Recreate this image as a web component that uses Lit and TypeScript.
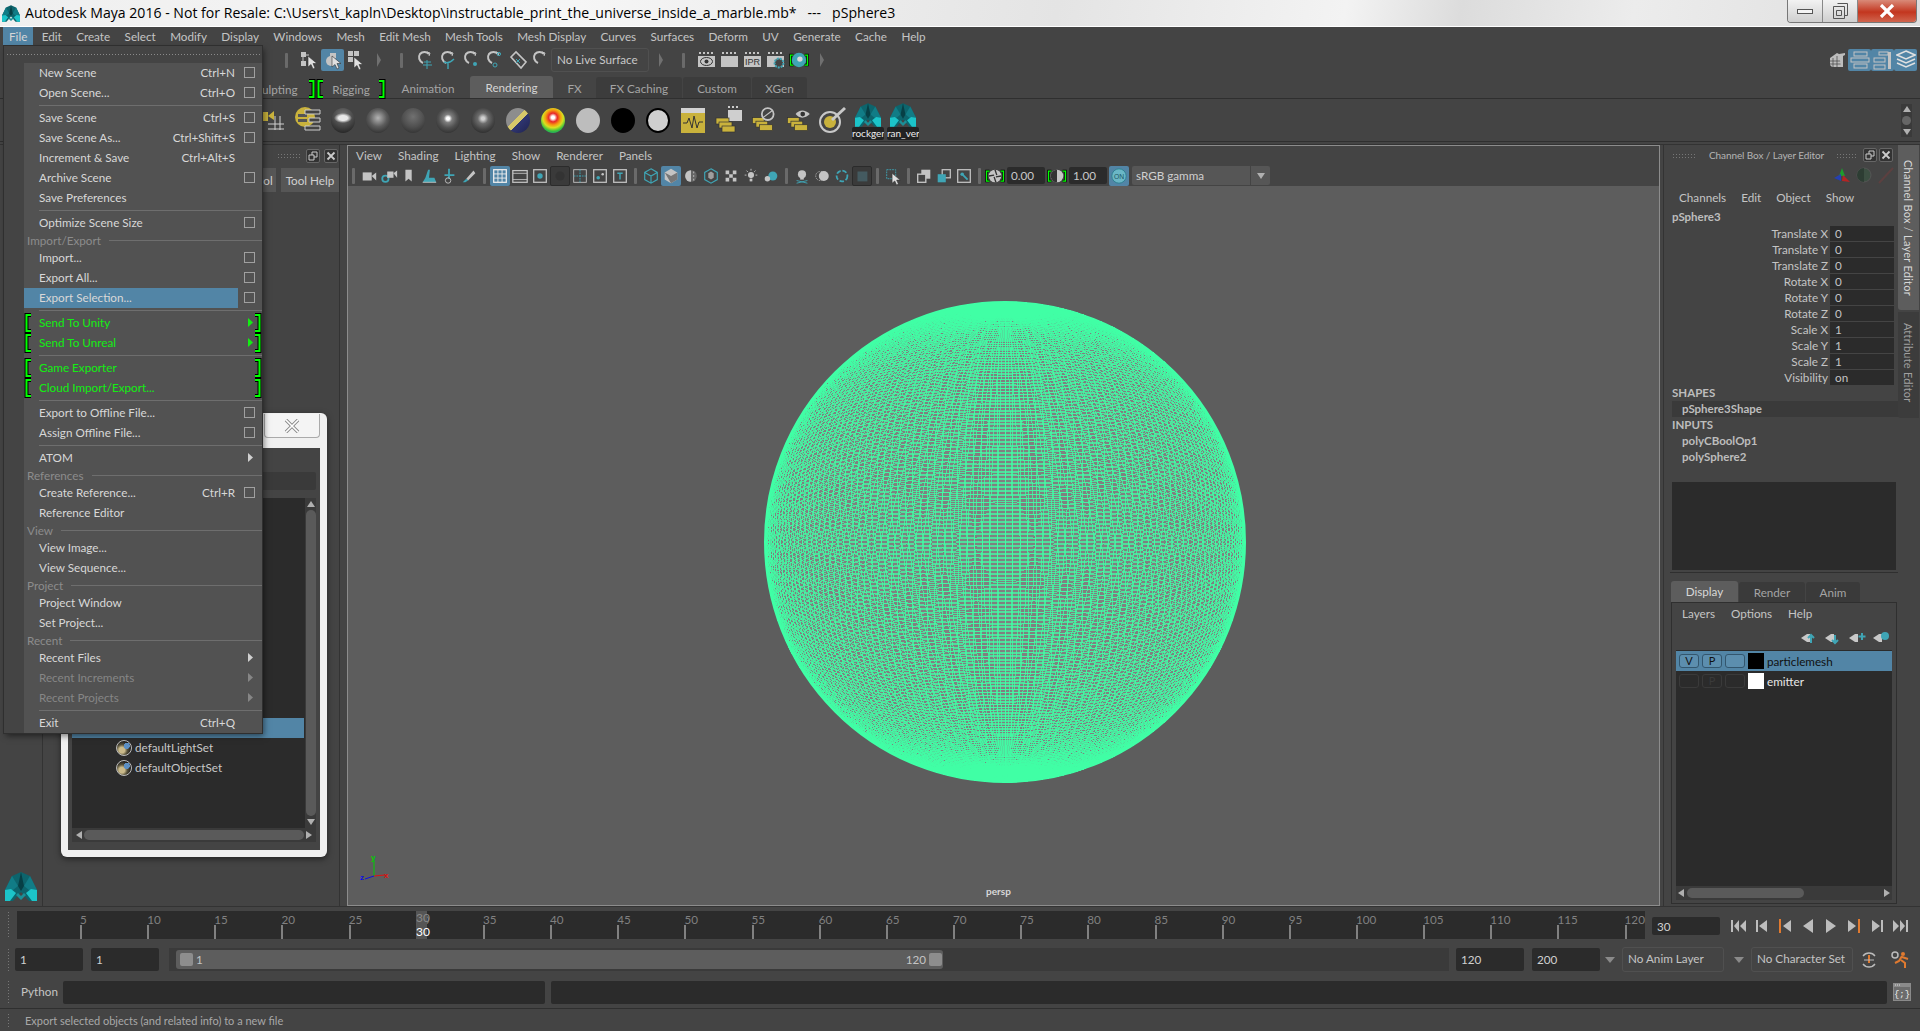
import { LitElement, html, css, svg } from "lit";
import { customElement } from "lit/decorators.js";

// sphere wireframe, both sides visible, tilted a little so the poles come into view
function sphereWire(r: number, nLon: number, nLat: number, tilt: number) {
  const c = Math.cos(tilt);
  const s = Math.sin(tilt);
  const pt = (lat: number, lon: number) => {
    const x = r * Math.cos(lat) * Math.sin(lon);
    const y = r * Math.sin(lat);
    const z = r * Math.cos(lat) * Math.cos(lon);
    return `${(r + x + 2).toFixed(1)} ${(r + 2 - (y * c - z * s)).toFixed(1)}`;
  };
  let d = "";
  for (let j = 0; j < nLon; j++) {
    const lon = (j / nLon) * Math.PI * 2;
    for (let i = 0; i <= 64; i++) {
      d += (i ? "L" : "M") + pt(-Math.PI / 2 + (i / 64) * Math.PI, lon);
    }
  }
  for (let i = 1; i < nLat; i++) {
    const lat = -Math.PI / 2 + (i / nLat) * Math.PI;
    for (let j = 0; j <= 128; j++) {
      d += (j ? "L" : "M") + pt(lat, (j / 128) * Math.PI * 2);
    }
  }
  return d;
}

const WIRE = sphereWire(240, 190, 190, 0.3);

const G = "#c4c4c4";
const T = "#3fa5b5";

const cursor = (x: number, y: number) =>
  svg`<path transform="translate(${x} ${y})" d="M0 0l0 11 3-2.5 2 4.5 2-1-2-4.5 4 0z" fill="#e0e0e0" stroke="#333" stroke-width=".6"/>`;

const magnet = (extra: unknown) => svg`
  <path d="M14 4a6 6 0 0 0-9 0c-2 3-1 7 3 9" fill="none" stroke=${G} stroke-width="2"/>
  <path d="M12 2l3 1-1 3" fill="none" stroke=${G} stroke-width="1"/>${extra}`;

const clap = (inner: unknown) => svg`
  <path d="M2 3h2M6 3h2M10 3h2M14 3h2" stroke=${G} stroke-width="2" stroke-dasharray="2 0"/>
  <rect x="1" y="6" width="17" height="11" fill=${G}/>${inner}`;

const layers = (top: unknown) => svg`
  <rect x="2" y="9" width="10" height="5" fill="#c9b23c" stroke="#333" stroke-width=".6"/>
  <rect x="5" y="12" width="10" height="5" fill="#c9b23c" stroke="#333" stroke-width=".6"/>
  <rect x="8" y="15" width="11" height="5" fill="#c9b23c" stroke="#333" stroke-width=".6"/>${top}`;

const box = (inner: unknown) => svg`
  <rect x="3" y="3" width="14" height="14" fill="none" stroke=${G} stroke-width="1.4"/>${inner}`;

const mayaMark = svg`
  <path d="M16 0l9 4 7 14v11h-8l-8-9-8 9H0V18L7 4z" fill="#0d646c"/>
  <path d="M16 0l3 14-3 5-3-5z" fill="#073f45"/>
  <path d="M7 4l6 10-5 4-8 0z" fill="#117c86"/>
  <path d="M25 4l-6 10 5 4 8 0z" fill="#117c86"/>
  <path d="M0 18l6-1 5 4-6 8H0z" fill="#1cc4c9"/>
  <path d="M32 18l-6-1-5 4 6 8h5z" fill="#1cc4c9"/>
  <path d="M13 21l3 3 3-3 2 2-5 5-5-5z" fill="#1b8f97"/>`;

const ICONS: Record<string, unknown> = {
  hier: svg`<rect x="1" y="2" width="5" height="5" fill=${G}/><rect x="1" y="11" width="5" height="5" fill=${G}/><path d="M3 7v4M6 5h3" stroke=${G}/>${cursor(8, 6)}`,
  obj: svg`<circle cx="8" cy="11" r="5" fill=${G}/><rect x="7" y="3" width="6" height="5" fill=${G}/>${cursor(9, 6)}`,
  comp: svg`<rect x="2" y="1" width="5" height="5" fill=${G}/><rect x="8" y="1" width="5" height="5" fill=${G}/><rect x="2" y="7" width="5" height="5" fill=${G}/>${cursor(8, 7)}`,
  m1: magnet(svg`<path d="M12 10v9M8 15h9M9 12h7" stroke=${T} fill="none"/>`),
  m2: magnet(svg`<path d="M6 12c4 2 7 0 10-3M10 13v6" stroke=${T} fill="none" stroke-width="1.4"/>`),
  m3: magnet(svg`<circle cx="14" cy="14" r="2" fill=${T}/>`),
  m4: magnet(svg`<circle cx="15" cy="4" r="1.6" fill="none" stroke=${T}/><circle cx="11" cy="15" r="2" fill="none" stroke=${T}/>`),
  m5: svg`<path d="M4 7l5-5 10 10-5 6z" fill="none" stroke=${G} stroke-width="1.6"/><path d="M9 9l4 4M9 13l4-4" stroke=${T}/>`,
  m6: magnet(""),
  eye: clap(svg`<ellipse cx="9.5" cy="11.5" rx="6" ry="4" fill="none" stroke="#333"/><circle cx="9.5" cy="11.5" r="2" fill="#333"/>`),
  blank: clap(""),
  ipr: clap(svg`<text x="9.5" y="15" font-size="9" font-family="Liberation Sans" text-anchor="middle" fill="#333">IPR</text>`),
  gear: clap(svg`<circle cx="13" cy="13" r="4.4" fill="#444" stroke=${T} stroke-width="2" stroke-dasharray="2 1"/>`),
  target: svg`<circle cx="10" cy="10" r="8" fill=${T}/><circle cx="11" cy="9" r="3" fill="#d8d8d8"/>`,
  cube: svg`<path d="M3 8l7-5 4 2v12H5l-2-2z" fill="#bdbdbd"/><path d="M6 8v9M10 6v11M3 11h11M3 14h11" stroke="#444" stroke-width=".7"/><path d="M12 4l6-1v2l-2 1v11h-2z" fill="#bdbdbd"/>`,
  r1: svg`<rect x="4" y="2" width="13" height="4" fill="none" stroke=${G}/><rect x="1" y="8" width="18" height="4" fill="none" stroke=${G}/><rect x="4" y="14" width="13" height="4" fill="none" stroke=${G}/>`,
  r2: svg`<rect x="6" y="2" width="9" height="3" fill="none" stroke=${G}/><rect x="1" y="8" width="11" height="4" fill="none" stroke=${G}/><rect x="1" y="15" width="11" height="4" fill="none" stroke=${G}/><path d="M15 2h3v17h-3z" fill=${G}/>`,
  r3: svg`<path d="M10 1l9 4-9 4-9-4zM1 9l9 4 9-4M1 13l9 4 9-4" fill="none" stroke="#e0e0e0" stroke-width="1.5"/>`,
  cam: svg`<rect x="3" y="6" width="10" height="9" fill=${G}/><path d="M13 10l5-4v9z" fill=${G}/>`,
  cam2: svg`<circle cx="6" cy="13" r="3.5" fill="none" stroke=${T} stroke-width="2"/><rect x="8" y="5" width="7" height="7" fill=${G}/><path d="M15 7l4-3v8z" fill=${G}/>`,
  book: svg`<path d="M6 3h7v13l-3.5-3L6 16z" fill=${G}/>`,
  snap: svg`<path d="M9 3l2 0-1 9h6l2 5H3l3-5z" fill=${T}/><path d="M3 17h15" stroke=${G}/>`,
  move: svg`<path d="M10 2v11M5 9h11" stroke=${T} stroke-width="2" fill="none"/><circle cx="9" cy="15" r="3" fill="none" stroke=${G}/>`,
  brush: svg`<path d="M15 4l-8 9 2 2 8-8z" fill=${G}/><path d="M3 17l4-4 2 2-3 2z" fill=${T}/>`,
  grid: svg`<rect x="3" y="3" width="14" height="14" fill="none" stroke="#eee" stroke-width="1.4"/><path d="M7.7 3v14M12.3 3v14M3 7.7h14M3 12.3h14" stroke="#eee"/>`,
  film: svg`<rect x="2" y="4" width="16" height="13" fill="none" stroke=${G} stroke-width="1.4"/><path d="M2 7h16M2 14h16" stroke=${G}/>`,
  dot: box(svg`<circle cx="10" cy="10" r="3" fill=${T}/>`),
  dark: svg`<circle cx="10" cy="10" r="5" fill="#333"/>`,
  cross: svg`<rect x="3" y="3" width="14" height="14" fill="none" stroke=${G}/><path d="M10 3v14M3 10h14" stroke=${T} stroke-dasharray="2 1"/>`,
  xy: box(svg`<circle cx="8" cy="12" r="2" fill=${T}/><circle cx="13" cy="8" r="1.4" fill=${G}/>`),
  tt: box(svg`<path d="M7 7h6M10 7v7" stroke=${T} stroke-width="1.6"/>`),
  wire: svg`<path d="M10 2l7 4v8l-7 4-7-4V6z M3 6l7 4 7-4M10 10v8" fill="none" stroke=${T} stroke-width="1.3"/>`,
  solid: svg`<path d="M10 2l7 4v8l-7 4-7-4V6z" fill=${G}/><path d="M3 6l7 4 7-4v8l-7 4z" fill="#777"/>`,
  half: svg`<circle cx="10" cy="10" r="6.5" fill="#666"/><path d="M10 3.5a6.500 6.500 0 0 0 0 13z" fill=${G}/><path d="M13 5v10" stroke=${G} stroke-dasharray="2 2"/>`,
  wcube: svg`<path d="M10 2l7 4v8l-7 4-7-4V6z" fill="none" stroke=${T} stroke-width="1.3"/><path d="M7 7l3-2 3 2v5l-3 2-3-2z" fill=${G} opacity=".7"/>`,
  check: svg`<path d="M4 4h4v4H4zM12 4h4v4h-4zM8 8h4v4H8zM4 12h4v4H4zM12 12h4v4h-4z" fill=${G}/>`,
  bulb: svg`<circle cx="10" cy="9" r="3.4" fill=${G}/><rect x="8.500" y="13" width="3" height="3" fill=${G}/><path d="M10 2v2M3 9h2M15 9h2M5 4l1.500 1.500M15 4l-1.500 1.500" stroke=${G}/>`,
  shade: svg`<circle cx="12" cy="10" r="5" fill=${T}/><circle cx="6" cy="13" r="3" fill=${G}/>`,
  skull: svg`<circle cx="10" cy="8" r="4.500" fill=${G}/><rect x="8" y="11" width="4" height="3" fill=${G}/><path d="M4 15l12 3M16 15L4 18" stroke=${T}/>`,
  rings: svg`<circle cx="12" cy="10" r="5.500" fill=${G}/><circle cx="8" cy="10" r="5" fill="none" stroke=${G} stroke-dasharray="1 1"/>`,
  ring: svg`<circle cx="10" cy="10" r="6" fill="none" stroke=${T} stroke-width="2" stroke-dasharray="5 2"/>`,
  tex: svg`<rect x="5" y="5" width="11" height="11" fill="#445a60"/>`,
  pick: svg`<rect x="3" y="3" width="10" height="10" fill="none" stroke=${T} stroke-dasharray="2 1"/>${cursor(9, 7)}`,
  iso1: svg`<rect x="7" y="3" width="10" height="10" fill=${G}/><rect x="3" y="8" width="9" height="9" fill="#444" stroke=${G} stroke-width="1.500"/>`,
  iso2: svg`<rect x="8" y="3" width="9" height="9" fill="none" stroke=${G} stroke-width="1.400"/><rect x="3" y="8" width="9" height="9" fill=${T}/>`,
  iso3: svg`<rect x="3" y="3" width="14" height="14" fill="none" stroke=${G} stroke-width="1.400"/><circle cx="8" cy="8" r="2" fill=${T}/><path d="M9 9l5 5" stroke=${T} stroke-width="2"/>`,
  exp: svg`<circle cx="10" cy="10" r="7" fill=${G}/><path d="M10 3l2 6M17 10l-6 1M11 17l-2-6M3 10l6-1" stroke="#333" stroke-width="1.500"/>`,
  gam: svg`<circle cx="10" cy="10" r="7" fill=${G}/><path d="M10 3a7 7 0 0 0 0 14z" fill="#333"/>`,
  on: svg`<circle cx="10" cy="10" r="8" fill="#6ab7c6" stroke="#2c7f8e"/><text x="10" y="13" font-size="7.500" font-family="Liberation Sans" text-anchor="middle" fill="#1d5560">ON</text>`,
};

const ic = (name: string, size = 20) =>
  html`<svg width=${size} height=${size} viewBox="0 0 20 20">${ICONS[name]}</svg>`;

const bracket = (h: number, flip = false) => html`<svg
  class="brk" width="8" height=${h} viewBox="0 0 8 ${h}"
  style=${flip ? "transform:scaleX(-1)" : ""}>
  <path d="M7 2H2.500V${h - 2}H7" fill="none" stroke="#000" stroke-width="4"/>
  <path d="M7 2H2.500V${h - 2}H7" fill="none" stroke="#00ff00" stroke-width="2"/>
</svg>`;

const caret = (color = "#bdbdbd") =>
  html`<svg width="6" height="10" viewBox="0 0 6 10"><path d="M0 0l5 4.500L0 9z" fill=${color}/></svg>`;

const MENUS = ["File", "Edit", "Create", "Select", "Modify", "Display", "Windows", "Mesh", "Edit Mesh", "Mesh Tools",
  "Mesh Display", "Curves", "Surfaces", "Deform", "UV", "Generate", "Cache", "Help"];

type Row = { t: string; k?: string; box?: boolean; arrow?: boolean; off?: boolean; green?: boolean; hi?: boolean; sec?: boolean; sep?: boolean };
const FILE_MENU: Row[] = [
  { t: "New Scene", k: "Ctrl+N", box: true },
  { t: "Open Scene...", k: "Ctrl+O", box: true },
  { t: "", sep: true },
  { t: "Save Scene", k: "Ctrl+S", box: true },
  { t: "Save Scene As...", k: "Ctrl+Shift+S", box: true },
  { t: "Increment & Save", k: "Ctrl+Alt+S" },
  { t: "Archive Scene", box: true },
  { t: "Save Preferences" },
  { t: "", sep: true },
  { t: "Optimize Scene Size", box: true },
  { t: "Import/Export", sec: true },
  { t: "Import...", box: true },
  { t: "Export All...", box: true },
  { t: "Export Selection...", box: true, hi: true },
  { t: "", sep: true },
  { t: "Send To Unity", green: true, arrow: true },
  { t: "Send To Unreal", green: true, arrow: true },
  { t: "", sep: true },
  { t: "Game Exporter", green: true },
  { t: "Cloud Import/Export...", green: true },
  { t: "", sep: true },
  { t: "Export to Offline File...", box: true },
  { t: "Assign Offline File...", box: true },
  { t: "", sep: true },
  { t: "ATOM", arrow: true },
  { t: "References", sec: true },
  { t: "Create Reference...", k: "Ctrl+R", box: true },
  { t: "Reference Editor" },
  { t: "View", sec: true },
  { t: "View Image..." },
  { t: "View Sequence..." },
  { t: "Project", sec: true },
  { t: "Project Window" },
  { t: "Set Project..." },
  { t: "Recent", sec: true },
  { t: "Recent Files", arrow: true },
  { t: "Recent Increments", arrow: true, off: true },
  { t: "Recent Projects", arrow: true, off: true },
  { t: "", sep: true },
  { t: "Exit", k: "Ctrl+Q" },
];

const SPHERES = ["s-a", "s-b", "s-c", "s-d", "s-e", "s-f", "s-g", "s-h", "s-i", "s-j"];
const CHANNELS: [string, string][] = [
  ["Translate X", "0"], ["Translate Y", "0"], ["Translate Z", "0"], ["Rotate X", "0"], ["Rotate Y", "0"],
  ["Rotate Z", "0"], ["Scale X", "1"], ["Scale Y", "1"], ["Scale Z", "1"], ["Visibility", "on"],
];
const TICKS = Array.from({ length: 24 }, (_, i) => (i + 1) * 5);

@customElement("app-root")
export class AppRoot extends LitElement {
  static styles = css`
    :host {
      display: block;
      position: relative;
      width: 1920px;
      height: 1031px;
      overflow: hidden;
      background: #444;
      color: #c4c4c4;
      font: 11.700px/16px Lato, "Liberation Sans", sans-serif;
    }
    svg { display: block; flex: none; }
    .titlebar {
      height: 26px;
      border-bottom: 1px solid #fff;
      display: flex;
      align-items: center;
      color: #000;
      background: linear-gradient(100deg, #efefef 0, #f6f6f6 30%, #e4e4e4 55%, #f3f3f3 70%, #dcdcdc 76%, #ececec 85%, #dedede 100%);
      font: 14.080px/24px "Open Sans", sans-serif;
      white-space: pre;
    }
    .titlebar .mark { margin: 0 5px 0 2px; }
    .titlebar .name { flex: 1; }
    .winbtns { display: flex; align-self: flex-start; height: 22px; margin-right: 3px; border: 1px solid #777; border-top: none; border-radius: 0 0 4px 4px; overflow: hidden; }
    .winbtn { width: 34px; display: flex; align-items: center; justify-content: center; background: linear-gradient(#f2f2f2, #cfcfcf); border-right: 1px solid #888; }
    .winbtn.close { width: 58px; border: none; background: linear-gradient(#d98a78, #c3361f 55%, #d0654e); }
    .menubar { height: 20px; display: flex; align-items: center; padding-left: 3px; }
    .menubar span { padding: 1px 6px 3px; margin-right: 2.400px; }
    .menubar span.on { background: #5285a6; color: #d6d6d6; }
    .status { height: 28px; display: flex; align-items: center; padding: 0 0 2px 275px; box-sizing: border-box; }
    .cell { width: 23px; height: 22px; display: flex; align-items: center; justify-content: center; flex: none; }
    .cell.on { background: #5285a6; border-radius: 2px; }
    .bar { width: 3px; height: 15px; background: #6a6a6a; border-radius: 1px; }
    .chev { width: 0; height: 0; border-left: 4px solid #707070; border-top: 7px solid transparent; border-bottom: 7px solid transparent; }
    .livebox { width: 98px; height: 24px; border: 1px solid #505050; border-radius: 3px; box-sizing: border-box; line-height: 21px; padding-left: 5px; color: #c8c8c8; }
    .right-tools { margin-left: auto; display: flex; padding-right: 3px; }
    .tabs { height: 23px; display: flex; align-items: flex-end; padding-left: 262px; border-bottom: 1px solid #2f2f2f; }
    .tab { height: 21px; line-height: 23px; text-align: center; color: #a4a4a4; flex: none; border-radius: 3px 3px 0 0; }
    .tab.on { background: #5d5d5d; color: #d4d4d4; height: 22px; }
    .tab.dim { background: #3c3c3c; margin-right: 1px; }
    .tab.brk-wrap { display: flex; align-items: center; justify-content: space-between; line-height: 16px; padding-top: 2px; box-sizing: border-box; }
    .shelf { height: 42px; display: flex; align-items: center; padding-left: 255.5px; border-bottom: 1px solid #2f2f2f; position: relative; }
    .scell { width: 35px; height: 34px; display: flex; flex-direction: column; align-items: center; justify-content: center; flex: none; position: relative; }
    .ball { width: 24px; height: 25px; border-radius: 50%; }
    .s-a { background: radial-gradient(ellipse 9px 5px at 50% 40%, #e8e8e8 0 50%, transparent 100%), radial-gradient(circle at 50% 30%, #777, #262626 85%); }
    .s-b { background: radial-gradient(circle at 50% 40%, #b4b4b4, #5c5c5c 45%, #262626 92%); }
    .s-c { background: radial-gradient(circle at 50% 35%, #717171, #505050 50%, #2a2a2a 95%); }
    .s-d { background: radial-gradient(circle at 50% 42%, #fff 0 8%, #7e7e7e 22%, #505050 50%, #262626 92%); }
    .s-e { background: radial-gradient(circle at 50% 42%, #d0d0d0 0 8%, #6c6c6c 28%, #444 58%, #222 92%); }
    .s-f { background: linear-gradient(135deg, transparent 42%, #d6c76a 42% 56%, transparent 56%), linear-gradient(135deg, #8d8d8d 0 42%, #2f3570 56%, #1f2350 100%); }
    .s-g { background: radial-gradient(circle at 50% 38%, #fff 0 8%, #e82828 22%, #f59a10 38%, #d8e020 52%, #35c040 70%, #1a8d88 90%); }
    .s-h { background: #bdbdbd; }
    .s-i { background: #000; }
    .s-j { background: #cfcfcf; box-sizing: border-box; border: 2px solid #000; }
    .wave { width: 24px; height: 25px; background: linear-gradient(#d2d2d2 0 5px, #c9b23c 5px); }
    .slabel { position: absolute; left: 1.5px; top: 24px; width: 32px; height: 13px; overflow: hidden; background: #222; border-radius: 2px; color: #eee; font-size: 10px; line-height: 13px; text-align: center; white-space: nowrap; }
    .shelf-scroll { position: absolute; right: 8px; top: 5px; width: 11px; height: 33px; background: #3a3a3a; display: flex; flex-direction: column; align-items: center; justify-content: space-between; padding: 2px 0; box-sizing: border-box; }
    .up { width: 0; height: 0; border: 4.500px solid transparent; border-top: none; border-bottom: 6px solid #b0b0b0; }
    .dn { width: 0; height: 0; border: 4.500px solid transparent; border-bottom: none; border-top: 6px solid #b0b0b0; }
    .knob { width: 9px; height: 9px; border-radius: 50%; background: #666; }
    .main { height: 762px; margin-top: 2px; display: flex; border-top: 1px solid #333; box-sizing: border-box; }
    .toolbox { width: 43px; border-right: 1px solid #333; display: flex; align-items: flex-end; justify-content: center; padding-bottom: 5px; box-sizing: border-box; flex: none; }
    .leftpanel { width: 297px; flex: none; border-right: 1px solid #333; box-sizing: border-box; }
    .phead { height: 21px; display: flex; align-items: center; justify-content: flex-end; gap: 4px; padding-right: 1px; }
    .dots { width: 25px; height: 5px; flex: none; background-image: radial-gradient(#777 .6px, transparent .8px); background-size: 3px 3px; }
    .dots.short { width: 22px; }
    .pbtn { width: 14px; height: 14px; background: #333; border: 1px solid #666; border-radius: 2px; box-sizing: border-box; display: flex; align-items: center; justify-content: center; }
    .lefttabs { display: flex; justify-content: flex-end; gap: 5px; margin-top: 2px; }
    .ltab { height: 24px; background: #565656; line-height: 24px; text-align: center; color: #d0d0d0; width: 58px; }
    .ltab.small { width: 16px; }
    .view { width: 1313px; margin-left: 7px; flex: none; border: 1px solid #8c8c8c; box-sizing: border-box; display: flex; flex-direction: column; }
    .vmenu { height: 19px; display: flex; gap: 16px; align-items: center; padding: 0 0 1px 8px; box-sizing: border-box; }
    .vtools { height: 21px; display: flex; align-items: center; }
    .vc { width: 20px; height: 20px; display: flex; align-items: center; justify-content: center; flex: none; border-radius: 2px; }
    .vc.on { background: #5285a6; }
    .vc.sunk { background: #3a3a3a; border: 1px solid #2b2b2b; box-sizing: border-box; }
    .vsep { width: 11px; display: flex; justify-content: center; flex: none; }
    .vsep .bar { height: 16px; }
    .field { width: 38px; height: 17px; background: #2b2b2b; border-radius: 2px; line-height: 16px; text-align: left; padding-left: 4px; box-sizing: border-box; margin: 0 2px; color: #c8c8c8; }
    .gamma { width: 138px; height: 19px; margin-left: 3px; background: #565656; border-radius: 2px; line-height: 18px; padding-left: 4px; box-sizing: border-box; display: flex; color: #d0d0d0; }
    .gamma span { flex: 1; }
    .gamma i { width: 19px; border-left: 1px solid #444; display: flex; align-items: center; justify-content: center; }
    .brpair { display: flex; justify-content: space-between; align-items: center; width: 20px; height: 20px; position: relative; }
    .brpair svg.brk { width: 5px; }
    .brpair .inner { position: absolute; left: 1px; top: 1px; }
    .canvas { flex: 1; background: #5d5d5d; position: relative; overflow: hidden; }
    .sphere { position: absolute; left: 415px; top: 114px; }
    .persp { position: absolute; left: 638px; top: 697px; font-size: 10px; font-weight: bold; color: #d8d8d8; }
    .axis { position: absolute; left: 12px; top: 668px; }
    .rightpanel { width: 255px; margin-left: 3px; flex: none; display: flex; border-left: 1px solid #333; box-sizing: border-box; }
    .cb { width: 233px; padding-left: 8px; box-sizing: border-box; flex: none; }
    .cbhead { height: 20px; display: flex; align-items: center; gap: 12px; font-size: 10px; letter-spacing: -.1px; color: #b4b4b4; white-space: nowrap; }
    .cbhead .btns { display: flex; gap: 2px; margin-left: -7px; }
    .cbicons { height: 20px; display: flex; justify-content: flex-end; align-items: center; gap: 4px; padding-right: 2px; }
    .cbmenu { height: 24px; display: flex; align-items: center; gap: 15px; padding-left: 7px; }
    .cbname { height: 16px; font-weight: bold; font-size: 11.500px; color: #bdbdbd; }
    .chan { height: 16px; display: flex; align-items: center; }
    .chan label { width: 158px; text-align: right; padding-right: 2px; box-sizing: border-box; flex: none; }
    .chan b { width: 64px; height: 15px; background: #2b2b2b; font-weight: normal; line-height: 15px; padding-left: 5px; box-sizing: border-box; }
    .sect { height: 16px; line-height: 16px; font-weight: bold; font-size: 11.500px; color: #bdbdbd; }
    .sect.sub { padding-left: 10px; }
    .sect.hl { background: #3a3a3a; width: 223px; }
    .blackbox { margin-top: 17px; height: 88px; width: 224px; background: #2b2b2b; }
    .rule { height: 1px; background: #2f2f2f; margin: 2px 0 8px -2px; width: 228px; }
    .ltabs { display: flex; height: 21px; gap: 1px; align-items: flex-end; margin-left: -1px; }
    .ltabs div { width: 66px; height: 20px; background: #3a3a3a; text-align: center; line-height: 21px; color: #a4a4a4; border-radius: 3px 3px 0 0; }
    .ltabs div.on { height: 21px; width: 67px; background: #5d5d5d; color: #d8d8d8; }
    .ltabs div.n { width: 54px; }
    .lframe { height: 302px; width: 226px; margin-left: -1px; border: 1px solid #2f2f2f; box-sizing: border-box; padding: 0 4px; display: flex; flex-direction: column; }
    .lmenu { height: 22px; display: flex; align-items: center; gap: 16px; padding: 0 0 2px 6px; box-sizing: border-box; }
    .licons { height: 25px; display: flex; justify-content: flex-end; gap: 5px; padding-right: 1px; align-items: center; }
    .llist { background: #2b2b2b; height: 236px; padding-top: 1px; box-sizing: border-box; }
    .lrow { height: 20px; display: flex; align-items: center; padding: 0 0 1px 3px; box-sizing: border-box; color: #e8e8e8; }
    .lrow.on { background: #5285a6; color: #111; }
    .lb { width: 20px; height: 14px; border: 1px solid #3a3a3a; border-radius: 3px; margin: 1px 3px 0 0; text-align: center; line-height: 12px; box-sizing: border-box; color: #3a3a3a; font-size: 11px; }
    .lrow.on .lb { border-color: #33566e; color: #111; background: #5c8eae; }
    .sw { width: 16px; height: 16px; margin: 1px 3px 0 0; }
    .hs { height: 14px; background: #3a3a3a; display: flex; align-items: center; gap: 3px; padding: 0 2px; }
    .hs i { height: 10px; background: #5a5a5a; border-radius: 5px; display: block; }
    .lt { border: 4px solid transparent; border-left: none; border-right: 6px solid #b0b0b0; }
    .rt { border: 4px solid transparent; border-right: none; border-left: 6px solid #b0b0b0; }
    .sidetabs { width: 21px; margin-left: 1px; flex: none; }
    .stab { writing-mode: vertical-rl; background: #3c3c3c; color: #a0a0a0; box-sizing: border-box; font-size: 11px; border-radius: 0 0 0 3px; margin-bottom: 2px; line-height: 21px; letter-spacing: .25px; }
    .stab.on { background: #5d5d5d; color: #d8d8d8; height: 165px; padding-top: 15px; }
    .stab.off { height: 106px; padding-top: 11px; }
    .timeline { height: 40px; display: flex; align-items: flex-start; padding-top: 4px; box-sizing: border-box; border-top: 1px solid #333; }
    .grip { width: 3px; margin: 0 5px 0 7px; flex: none; background-image: radial-gradient(#777 .7px, transparent .9px); background-size: 3px 3px; }
    .ruler { width: 1628px; height: 28px; background: #2b2b2b; display: flex; padding-left: 63px; box-sizing: border-box; position: relative; flex: none; }
    .tk { width: 67.170px; flex: none; color: #808080; line-height: 14px; height: 28px; display: flex; flex-direction: column; }
    .tk span { height: 13px; padding-top: 1px; white-space: nowrap; }
    .tk i { width: 2px; height: 14px; background: #808080; margin-top: auto; }
    .cur { position: absolute; left: 399px; top: 0; width: 11px; height: 28px; background: #555; color: #fff; font-size: 12px; line-height: 14px; }
    .cur span { display: block; white-space: nowrap; }
    .cur .g { color: #888; }
    .frame { width: 68px; height: 18px; margin: 6px 0 0 7px; background: #2b2b2b; border-radius: 2px; line-height: 18px; padding-left: 5px; box-sizing: border-box; color: #d0d0d0; flex: none; }
    .play { display: flex; margin: 5px 0 0 7px; }
    .play div { width: 23px; height: 20px; display: flex; justify-content: center; align-items: center; }
    .range { height: 30px; display: flex; align-items: center; padding-bottom: 3px; box-sizing: border-box; }
    .num { width: 68px; height: 23px; background: #2b2b2b; border-radius: 2px; line-height: 22px; padding-left: 5px; box-sizing: border-box; margin-right: 8px; color: #d0d0d0; flex: none; }
    .track { width: 1280px; height: 23px; margin-right: 7px; margin-left: 2px; background: #3a3a3a; padding: 2px 0 2px 7px; box-sizing: border-box; flex: none; }
    .track div { width: 767px; height: 19px; background: #5d5d5d; border-radius: 3px; display: flex; align-items: center; padding: 0 1px 1px 4px; box-sizing: border-box; justify-content: space-between; }
    .track span { display: flex; align-items: center; gap: 3px; }
    .track i { width: 13px; height: 13px; background: #8d8d8d; border-radius: 2px; display: block; }
    .drop { width: 0; height: 0; border: 5px solid transparent; border-bottom: none; border-top: 6px solid #8a8a8a; flex: none; margin: 0 7px 0 5px; }
    .sel { width: 102px; height: 25px; border: 1px solid #505050; border-radius: 3px; box-sizing: border-box; line-height: 21px; padding-left: 5px; flex: none; white-space: nowrap; }
    .python { height: 33px; display: flex; align-items: center; border-bottom: 1px solid #2f2f2f; box-sizing: border-box; }
    .python .lbl { width: 42px; flex: none; margin-left: 6px; padding-bottom: 2px; box-sizing: border-box; }
    .py { height: 23px; background: #2b2b2b; border-radius: 2px; flex: none; margin-right: 6px; }
    .statusline { height: 23px; display: flex; align-items: center; font-size: 11px; color: #a8a8a8; }
    .filemenu { position: absolute; left: 4px; top: 46px; width: 258px; height: 687px; background: #444; box-shadow: 2px 3px 6px rgba(0, 0, 0, .5); outline: 1px solid #2f2f2f; display: flex; flex-direction: column; z-index: 3; }
    .tear { height: 17px; flex: none; display: flex; align-items: center; padding: 0 2px; }
    .tear i { display: block; width: 100%; height: 3px; background-image: radial-gradient(#8a8a8a .6px, transparent .8px); background-size: 3px 3px; }
    .mbody { flex: 1; margin-left: 20px; background: #525252; }
    .mi { height: 20px; display: flex; align-items: center; padding: 0 0 2px 15px; box-sizing: border-box; position: relative; color: #d8d8d8; }
    .mi .tx { flex: 1; }
    .mi .k { width: 100px; text-align: right; position: absolute; right: 27px; top: 1px; }
    .mi .bx { position: absolute; right: 7px; top: 4px; width: 11px; height: 11px; border: 1px solid #a0a0a0; box-sizing: border-box; }
    .mi .ar { position: absolute; right: 8px; top: 5px; }
    .mi.hi::before { content: ""; position: absolute; left: 0; top: 0; bottom: 0; width: 214px; background: #5285a6; }
    .mi.hi .tx { position: relative; }
    .mi.off { color: #868686; }
    .mi.green { color: #13ee13; }
    .mi .bl { position: absolute; left: 0; top: 0; }
    .mi .br { position: absolute; right: 0; top: 0; }
    .msep { height: 5px; display: flex; align-items: center; padding-left: 15px; }
    .msep::after { content: ""; flex: 1; height: 1px; background: #6e6e6e; }
    .msec { height: 15px; display: flex; align-items: center; gap: 8px; padding: 0 0 2px 3px; box-sizing: border-box; color: #8c8c8c; }
    .msec::after { content: ""; flex: 1; height: 1px; background: #6e6e6e; margin-top: 2px; }
    .dialog { position: absolute; left: 61px; top: 413px; width: 266px; height: 444px; background: #f0f0f0; border-radius: 6px; box-shadow: 0 2px 6px rgba(0, 0, 0, .5); padding: 35px 7px 7px; box-sizing: border-box; z-index: 2; }
    .dclose { position: absolute; right: 7px; top: 1px; width: 56px; height: 24px; background: #f4f4f4; border: 1px solid #aaa; border-top: none; border-radius: 0 0 4px 4px; display: flex; align-items: center; justify-content: center; box-sizing: border-box; }
    .dinner { background: #444; height: 100%; display: flex; flex-direction: column; padding: 24px 4px 0 4px; box-sizing: border-box; }
    .dfield { height: 18px; background: #3a3a3a; margin-bottom: 8px; flex: none; border-radius: 2px; }
    .dlist { flex: 1; display: flex; min-height: 0; }
    .dtree { flex: 1; background: #2b2b2b; padding-top: 220px; box-sizing: border-box; }
    .drow { height: 20px; display: flex; align-items: center; padding: 0 0 2px 44px; box-sizing: border-box; gap: 3px; color: #c8c8c8; margin-right: 1px; }
    .drow.sel2 { background: #5285a6; }
    .dico { width: 16px; height: 16px; margin-top: 2px; border-radius: 50%; background: radial-gradient(circle at 70% 35%, #5c8fc2 0 22%, transparent 24%), radial-gradient(circle at 35% 65%, #c9b98a 0 22%, #57513a 42%, #1d1d1d 70%); border: 1px solid #bbb; box-sizing: border-box; }
    .dscroll { width: 11px; background: #3a3a3a; display: flex; flex-direction: column; align-items: center; gap: 3px; padding: 3px 0; box-sizing: border-box; flex: none; }
    .dscroll i { flex: 1; width: 10px; background: #5a5a5a; border-radius: 5px; display: block; }
    .dh { height: 14px; flex: none; margin-bottom: 8px; display: flex; align-items: center; gap: 2px; background: #3a3a3a; padding: 0 4px; box-sizing: border-box; }
    .dh i { flex: 1; height: 10px; background: #5a5a5a; border-radius: 5px; display: block; }
  `;

  private menuRow(r: Row) {
    if (r.sep) return html`<div class="msep"></div>`;
    if (r.sec) return html`<div class="msec">${r.t}</div>`;
    const cls = `mi${r.hi ? " hi" : ""}${r.off ? " off" : ""}${r.green ? " green" : ""}`;
    return html`<div class=${cls}>
      <span class="tx">${r.t}</span>
      ${r.k ? html`<span class="k">${r.k}</span>` : ""}
      ${r.box ? html`<i class="bx"></i>` : ""}
      ${r.arrow ? html`<span class="ar">${caret(r.green ? "#13ee13" : r.off ? "#868686" : "#d0d0d0")}</span>` : ""}
      ${r.green ? html`<span class="bl">${bracket(20)}</span><span class="br">${bracket(20, true)}</span>` : ""}
    </div>`;
  }

  private tri(d: string, accent = "") {
    return html`<svg width="18" height="18" viewBox="0 0 18 18"><path d=${d} fill="#bdbdbd"/>${accent ? svg`<path d=${accent} fill="#e07a30"/>` : ""}</svg>`;
  }

  private vcell(name: string, cls = "") {
    return html`<div class="vc ${cls}">${ic(name, 18)}</div>`;
  }

  render() {
    const sep = html`<div class="vsep"><div class="bar"></div></div>`;
    const pbtns = html`
      <div class="pbtn"><svg width="10" height="10" viewBox="0 0 10 10"><path d="M1 4h5v5H1zM4 4V1h5v5H6" fill="none" stroke="#ccc"/></svg></div>
      <div class="pbtn"><svg width="10" height="10" viewBox="0 0 10 10"><path d="M1.500 1.500l7 7M8.500 1.500l-7 7" stroke="#ccc" stroke-width="1.800"/></svg></div>`;
    return html`
      <div class="titlebar">
        <svg class="mark" width="18" height="17" viewBox="0 0 32 29">${mayaMark}</svg>
        <span class="name">Autodesk Maya 2016 - Not for Resale: C:\\Users\\t_kapln\\Desktop\\instructable_print_the_universe_inside_a_marble.mb*   ---   pSphere3</span>
        <div class="winbtns">
          <div class="winbtn"><svg width="16" height="8" viewBox="0 0 16 8"><rect x=".5" y="2.500" width="15" height="4" fill="#f4f4f4" stroke="#555"/></svg></div>
          <div class="winbtn"><svg width="18" height="18" viewBox="0 0 18 18"><path d="M6.500 1.500h10v12h-3M2.500 4.500h11v12h-11zM5.500 8.500h5v5h-5z" fill="none" stroke="#555"/></svg></div>
          <div class="winbtn close"><svg width="16" height="14" viewBox="0 0 16 14"><path d="M2 1l12 12M14 1L2 13" stroke="#fff" stroke-width="3.200"/></svg></div>
        </div>
      </div>
      <div class="menubar">${MENUS.map((m, i) => html`<span class=${i ? "" : "on"}>${m}</span>`)}</div>
      <div class="status">
        <div class="cell"><div class="bar"></div></div>
        <div class="cell">${ic("hier")}</div>
        <div class="cell on">${ic("obj")}</div>
        <div class="cell">${ic("comp")}</div>
        <div class="cell"><div class="chev"></div></div>
        <div class="cell"><div class="bar"></div></div>
        ${["m1", "m2", "m3", "m4", "m5", "m6"].map((n) => html`<div class="cell">${ic(n)}</div>`)}
        <div class="livebox">No Live Surface</div>
        <div class="cell"><div class="chev"></div></div>
        <div class="cell"><div class="bar"></div></div>
        ${["eye", "blank", "ipr", "gear"].map((n) => html`<div class="cell">${ic(n)}</div>`)}
        <div class="cell"><div class="brpair">${bracket(20)}<span class="inner">${ic("target", 18)}</span>${bracket(20, true)}</div></div>
        <div class="cell"><div class="chev"></div></div>
        <div class="right-tools">
          <div class="cell">${ic("cube")}</div>
          <div class="cell on">${ic("r1")}</div>
          <div class="cell on">${ic("r2")}</div>
          <div class="cell on">${ic("r3")}</div>
        </div>
      </div>
      <div class="tabs">
        <div class="tab brk-wrap" style="width:54px">ulpting ${bracket(20, true)}</div>
        <div class="tab brk-wrap" style="width:70px">${bracket(20)}Rigging${bracket(20, true)}</div>
        <div class="tab" style="width:84px">Animation</div>
        <div class="tab on" style="width:83px">Rendering</div>
        <div class="tab" style="width:43px">FX</div>
        <div class="tab dim" style="width:86px">FX Caching</div>
        <div class="tab dim" style="width:68px">Custom</div>
        <div class="tab dim" style="width:55px">XGen</div>
      </div>
      <div class="shelf">
        <div class="scell"><svg width="24" height="24" viewBox="0 0 24 24"><path d="M0 4h7v9H0zM7 8l6-5v9z" fill="#c9b23c"/><path d="M14 8v14M7 16h16M7 21h16M19 8v14" stroke="#d0d0d0"/></svg></div>
        <div class="scell"><svg width="26" height="26" viewBox="0 0 26 26"><circle cx="10" cy="10" r="10" fill="#c9b23c"/><path d="M3 7h9v3H3zM3 12h9v3H3z" fill="#555"/><path d="M10 3h15v4H10zM14 11h11v4H14zM10 19h15v4H10z" fill="#444" stroke="#ccc"/></svg></div>
        ${SPHERES.map((c) => html`<div class="scell"><div class="ball ${c}"></div></div>`)}
        <div class="scell"><div class="wave"><svg width="24" height="20" viewBox="0 0 24 20" style="margin-top:5px"><path d="M2 10h4l2-5 3 10 2-12 3 12 2-6h4" fill="none" stroke="#333"/></svg></div></div>
        <div class="scell"><svg width="28" height="28" viewBox="0 0 28 28"><path d="M14 4h14v11H14z" fill="#cfcfcf"/><path d="M14 1h2M18 1h2M22 1h2" stroke="#ccc" stroke-width="2"/><g fill="#c9b23c" stroke="#333" stroke-width=".7"><rect x="2" y="12" width="13" height="6"/><rect x="5" y="16" width="13" height="6"/><rect x="8" y="20" width="13" height="6"/></g></svg></div>
        <div class="scell"><svg width="26" height="26" viewBox="0 0 22 22">${layers(svg`<circle cx="15" cy="6" r="5" fill="none" stroke=${G} stroke-width="1.500"/><path d="M11 9l8-6" stroke=${G}/>`)}</svg></div>
        <div class="scell"><svg width="26" height="26" viewBox="0 0 22 22">${layers(svg`<path d="M9 6c3-4 8-4 12 0-4 4-9 4-12 0z" fill=${G}/><circle cx="15" cy="6" r="2" fill="#333"/>`)}</svg></div>
        <div class="scell"><svg width="28" height="28" viewBox="0 0 28 28"><circle cx="11" cy="16" r="10" fill="none" stroke="#c8c8c8" stroke-width="2"/><circle cx="11" cy="16" r="6" fill="#c9b23c"/><path d="M13 14L26 2" stroke="#c8c8c8" stroke-width="3"/></svg></div>
        <div class="scell"><svg width="26" height="24" viewBox="0 0 32 29" style="margin-top:-10px">${mayaMark}</svg><div class="slabel">rockgen</div></div>
        <div class="scell"><svg width="26" height="24" viewBox="0 0 32 29" style="margin-top:-10px">${mayaMark}</svg><div class="slabel">ran_ver</div></div>
        <div class="shelf-scroll"><div class="up"></div><div class="knob"></div><div class="dn"></div></div>
      </div>
      <div class="main">
        <div class="toolbox"><svg width="32" height="29" viewBox="0 0 32 29">${mayaMark}</svg></div>
        <div class="leftpanel">
          <div class="phead"><div class="dots"></div>${pbtns}</div>
          <div class="lefttabs"><div class="ltab small">ol</div><div class="ltab">Tool Help</div></div>
        </div>
        <div class="view">
          <div class="vmenu">${["View", "Shading", "Lighting", "Show", "Renderer", "Panels"].map((m) => html`<span>${m}</span>`)}</div>
          <div class="vtools">
            ${sep}
            ${["cam", "cam2", "book", "snap", "move", "brush"].map((n) => this.vcell(n))}
            ${sep}
            ${this.vcell("grid", "on")}
            ${this.vcell("film")}${this.vcell("dot")}${this.vcell("dark", "sunk")}${this.vcell("cross")}${this.vcell("xy")}${this.vcell("tt")}
            ${sep}
            ${this.vcell("wire")}${this.vcell("solid", "on")}${this.vcell("half")}${this.vcell("wcube")}${this.vcell("check")}${this.vcell("bulb")}${this.vcell("shade")}
            ${sep}
            ${this.vcell("skull")}${this.vcell("rings")}${this.vcell("ring")}${this.vcell("tex", "sunk")}
            ${sep}
            ${this.vcell("pick")}
            ${sep}
            ${this.vcell("iso1")}${this.vcell("iso2")}${this.vcell("iso3")}
            ${sep}
            <div class="brpair">${bracket(20)}<span class="inner">${ic("exp", 18)}</span>${bracket(20, true)}</div>
            <div class="field">0.00</div>
            <div class="brpair">${bracket(20)}<span class="inner">${ic("gam", 18)}</span>${bracket(20, true)}</div>
            <div class="field">1.00</div>
            ${this.vcell("on", "on")}
            <div class="gamma"><span>sRGB gamma</span><i><b class="dn"></b></i></div>
          </div>
          <div class="canvas">
            <svg class="sphere" width="484" height="484" viewBox="0 0 484 484">
              <circle cx="242" cy="242" r="240" fill="#808080"/>
              <path d=${WIRE} fill="none" stroke="#40ffa6" stroke-width=".75" shape-rendering="crispEdges"/>
              <circle cx="242" cy="242" r="240" fill="none" stroke="#40ffa6" stroke-width="2"/>
            </svg>
            <svg class="axis" width="30" height="30" viewBox="0 0 30 30">
              <path d="M14 22V6" stroke="#00d000"/><path d="M14 22l11-1" stroke="#e01010"/><path d="M14 22l-9 3" stroke="#1010e0"/>
              <text x="11" y="6" font-size="8" font-weight="bold" font-family="Liberation Sans" fill="#00d000">y</text>
              <text x="24" y="24" font-size="8" font-weight="bold" font-family="Liberation Sans" fill="#e01010">x</text>
              <text x="0" y="26" font-size="8" font-weight="bold" font-family="Liberation Sans" fill="#1010e0">z</text>
            </svg>
            <div class="persp">persp</div>
          </div>
        </div>
        <div class="rightpanel">
          <div class="cb">
            <div class="cbhead"><div class="dots"></div><span>Channel Box / Layer Editor</span><div class="dots short"></div><div class="btns">${pbtns}</div></div>
            <div class="cbicons">
              <svg width="18" height="18" viewBox="0 0 18 18"><path d="M9 2l3 8H6z" fill="#1c9c2e"/><path d="M1 12l7-4v7z" fill="#2540b0"/><path d="M17 16l-8-1 1-6z" fill="#b52424"/></svg>
              <svg width="18" height="18" viewBox="0 0 18 18"><circle cx="9" cy="9" r="7" fill="#3c4f42" stroke="#555"/><path d="M9 2a7 7 0 0 0 0 14z" fill="#2d3d33"/></svg>
              <svg width="18" height="18" viewBox="0 0 18 18"><path d="M2 17L16 2" stroke="#5c4040" stroke-width="2"/></svg>
            </div>
            <div class="cbmenu"><span>Channels</span><span>Edit</span><span>Object</span><span>Show</span></div>
            <div class="cbname">pSphere3</div>
            ${CHANNELS.map(([l, v]) => html`<div class="chan"><label>${l}</label><b>${v}</b></div>`)}
            <div class="sect">SHAPES</div>
            <div class="sect sub hl">pSphere3Shape</div>
            <div class="sect">INPUTS</div>
            <div class="sect sub">polyCBoolOp1</div>
            <div class="sect sub">polySphere2</div>
            <div class="blackbox"></div>
            <div class="rule"></div>
            <div class="ltabs"><div class="on">Display</div><div>Render</div><div class="n">Anim</div></div>
            <div class="lframe">
              <div class="lmenu"><span>Layers</span><span>Options</span><span>Help</span></div>
              <div class="licons">
                ${["M11 4v8M8 7l3-3 3 3", "M11 4v8M8 9l3 3 3-3", "M14 2v7M10.500 5.500h7", ""].map((d) => html`<svg width="19" height="14" viewBox="0 0 19 14"><path d="M1 7l6-4h3v8H7z" fill="#c8c8c8"/>${d ? svg`<path d=${d} fill="none" stroke="#3fa5b5" stroke-width="2"/>` : svg`<circle cx="13" cy="5" r="4" fill="#3fa5b5"/>`}</svg>`)}
              </div>
              <div class="llist">
                <div class="lrow on"><div class="lb">V</div><div class="lb">P</div><div class="lb"></div><div class="sw" style="background:#000"></div>particlemesh</div>
                <div class="lrow"><div class="lb"></div><div class="lb">P</div><div class="lb"></div><div class="sw" style="background:#fff"></div>emitter</div>
              </div>
              <div class="hs"><b class="lt"></b><i style="width:117px"></i><span style="flex:1"></span><b class="rt"></b></div>
            </div>
          </div>
          <div class="sidetabs">
            <div class="stab on">Channel Box / Layer Editor</div>
            <div class="stab off">Attribute Editor</div>
          </div>
        </div>
      </div>
      <div class="timeline">
        <div class="grip" style="height:28px;margin-right:7px"></div>
        <div class="ruler">
          ${TICKS.map((n) => html`<div class="tk"><span>${n}</span><i></i></div>`)}
          <div class="cur"><span class="g">30</span><span>30</span></div>
        </div>
        <div class="frame">30</div>
        <div class="play">
          <div>${this.tri("M1 3h2v12H1zM9 3v12L4 9zM16 3v12L10 9z")}</div>
          <div>${this.tri("M3 3h2v12H3zM14 3v12L6 9z")}</div>
          <div>${this.tri("M15 3v12L7 9z", "M3 2h2v14H3z")}</div>
          <div>${this.tri("M14 2v14L4 9z")}</div>
          <div>${this.tri("M4 2v14l10-7z")}</div>
          <div>${this.tri("M3 3v12l8-6z", "M13 2h2v14h-2z")}</div>
          <div>${this.tri("M13 3h2v12h-2zM4 3v12l8-6z")}</div>
          <div>${this.tri("M15 3h2v12h-2zM2 3v12l6-6zM9 3v12l5-6z")}</div>
        </div>
      </div>
      <div class="range">
        <div class="grip" style="height:24px"></div>
        <div class="num">1</div>
        <div class="num">1</div>
        <div class="track"><div><span><i></i>1</span><span>120<i></i></span></div></div>
        <div class="num">120</div>
        <div class="num" style="margin-right:0">200</div>
        <div class="drop"></div>
        <div class="sel">No Anim Layer</div>
        <div class="drop" style="margin-left:10px"></div>
        <div class="sel">No Character Set</div>
        <div style="margin-left:7px">
          <svg width="18" height="18" viewBox="0 0 18 18"><path d="M3 5a7.500 7.500 0 0 1 12 0M15 13a7.500 7.500 0 0 1-12 0" fill="none" stroke="#bbb" stroke-width="1.300"/><path d="M9 4v8" stroke="#e07a30" stroke-width="2"/><path d="M4 9h10" stroke="#bbb"/></svg>
        </div>
        <div style="margin-left:12px">
          <svg width="20" height="20" viewBox="0 0 20 20"><circle cx="5" cy="5" r="3" fill="none" stroke="#bbb" stroke-width="1.500"/><circle cx="13" cy="4" r="2" fill="#e07a30"/><path d="M12 6l-3 5-4 2M11 10l4 3v5M12 7l6 2" fill="none" stroke="#e07a30" stroke-width="2"/></svg>
        </div>
      </div>
      <div class="python">
        <div class="grip" style="height:24px"></div>
        <div class="lbl">Python</div>
        <div class="py" style="width:482px"></div>
        <div class="py" style="width:1336px"></div>
        <svg width="18" height="18" viewBox="0 0 18 18"><rect width="18" height="18" fill="#8a8a8a"/><rect x="1" y="4" width="16" height="13" fill="#6c6c6c"/><path d="M2 2h6" stroke="#ddd" stroke-dasharray="1 1"/><text x="9" y="14" font-size="9" font-family="Liberation Mono" text-anchor="middle" fill="#eee">{;}</text></svg>
      </div>
      <div class="statusline">
        <div class="grip" style="height:15px"></div>
        <span style="margin-left:10px">Export selected objects (and related info) to a new file</span>
      </div>

      <div class="dialog">
        <div class="dclose"><svg width="16" height="14" viewBox="0 0 16 14"><path d="M2 1l12 12M14 1L2 13" stroke="#888" stroke-width="3.400"/><path d="M2 1l12 12M14 1L2 13" stroke="#fff" stroke-width="1.600"/></svg></div>
        <div class="dinner">
          <div class="dfield"></div>
          <div class="dlist">
            <div class="dtree">
              <div class="drow sel2"></div>
              <div class="drow"><div class="dico"></div>defaultLightSet</div>
              <div class="drow"><div class="dico"></div>defaultObjectSet</div>
            </div>
            <div class="dscroll"><b class="up"></b><i></i><b class="dn"></b></div>
          </div>
          <div class="dh"><b class="lt"></b><i></i><b class="rt"></b></div>
        </div>
      </div>

      <div class="filemenu">
        <div class="tear"><i></i></div>
        <div class="mbody">${FILE_MENU.map((r) => this.menuRow(r))}</div>
      </div>
    `;
  }
}
